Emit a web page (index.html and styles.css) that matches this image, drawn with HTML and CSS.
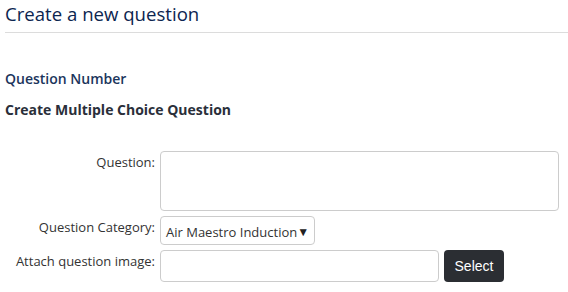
FILE: index.html
```html
<!DOCTYPE html>
<html lang="en">
<head>
  <meta charset="UTF-8">
  <title>Create a new question</title>
  <link rel="stylesheet" href="styles.css">
</head>
<body>

  <header class="page-head">
    <h1>Create a new question</h1>
  </header>

  <div class="container">
    <h4 class="q-number">Question Number</h4>
    <h4 class="q-type">Create Multiple Choice Question</h4>

    <form class="q-form">
      <div class="row">
        <label for="pergunta">Question:</label>
        <textarea id="pergunta" class="q-text"></textarea>
      </div>

      <div class="row">
        <label for="categoria">Question Category:</label>
        <div class="select-box" id="categoria">
          <span>Air Maestro Induction</span>
          <span class="arrow">&#9660;</span>
        </div>
      </div>

      <div class="row">
        <label for="imagem">Attach question image:</label>
        <div class="file-group">
          <input type="text" id="imagem" class="file-name">
          <button type="button" class="btn-select">Select</button>
        </div>
      </div>
    </form>
  </div>

</body>
</html>
```

FILE: styles.css
```css
body {
  font-family: 'Open Sans', sans-serif;
  margin: 0;
  padding: 0 0 0 5px;
  background-color: white;
  color: #333;
}

.page-head {
  border-bottom: 1px solid #dcdcdc;
  padding: 2px 0 6px;
}

.page-head h1 {
  margin: 0;
  font-size: 18.6px;
  font-weight: normal;
  line-height: 24px;
  color: #0c2550;
}

.container {
  padding-top: 36px;
}

.q-number,
.q-type {
  margin: 0;
  font-size: 14px;
  line-height: 20px;
}

.q-number {
  font-weight: 600;
  color: #1b355c;
}

.q-type {
  margin-top: 11px;
  font-weight: bold;
  color: #2a2f3a;
}

.q-form {
  margin-top: 31px;
  display: grid;
  gap: 5px;
}

.row {
  display: flex;
  gap: 5px;
}

.row label {
  width: 150px;
  text-align: right;
  font-size: 13px;
  line-height: 18px;
  padding-top: 2px;
  color: #333;
}

.q-text {
  width: 399px;
  height: 60px;
  box-sizing: border-box;
  border: 1px solid #ccc;
  border-radius: 4px;
  resize: none;
  margin: 0;
}

.select-box {
  width: 155px;
  height: 29px;
  box-sizing: border-box;
  border: 1px solid #ccc;
  border-radius: 4px;
  padding: 6px 0 0 5px;
  font-size: 13px;
  line-height: 18px;
  color: #333;
  display: flex;
}

.select-box .arrow {
  font-size: 12px;
  color: #222;
}

.file-group {
  display: flex;
  gap: 5px;
}

.file-name {
  width: 279px;
  height: 32px;
  box-sizing: border-box;
  border: 1px solid #ccc;
  border-radius: 4px;
  margin: 0;
}

.btn-select {
  width: 60px;
  height: 32px;
  background-color: #2b2e33;
  color: white;
  border: none;
  border-radius: 4px;
  font-family: 'Liberation Sans', Arial, sans-serif;
  font-size: 14px;
  cursor: pointer;
}
```
